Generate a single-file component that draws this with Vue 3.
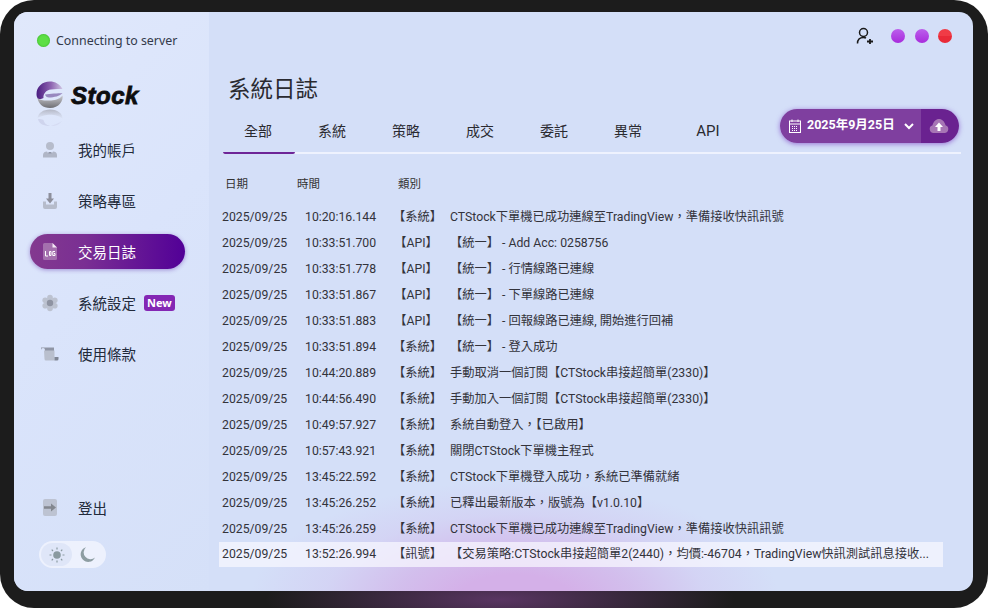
<script setup>
const menu = [
  { key: 'user', label: '我的帳戶' },
  { key: 'strategy', label: '策略專區' },
  { key: 'log', label: '交易日誌', active: true },
  { key: 'gear', label: '系統設定', badge: 'New' },
  { key: 'scroll', label: '使用條款' },
]
const tabs = ['全部', '系統', '策略', '成交', '委託', '異常', 'API']
const rows = [
  ['10:20:16.144', '【系統】', 'CTStock下單機已成功連線至TradingView，準備接收快訊訊號'],
  ['10:33:51.700', '【API】', '【統一】 - Add Acc: 0258756'],
  ['10:33:51.778', '【API】', '【統一】 - 行情線路已連線'],
  ['10:33:51.867', '【API】', '【統一】 - 下單線路已連線'],
  ['10:33:51.883', '【API】', '【統一】 - 回報線路已連線, 開始進行回補'],
  ['10:33:51.894', '【系統】', '【統一】 - 登入成功'],
  ['10:44:20.889', '【系統】', '手動取消一個訂閱【CTStock串接超簡單(2330)】'],
  ['10:44:56.490', '【系統】', '手動加入一個訂閱【CTStock串接超簡單(2330)】'],
  ['10:49:57.927', '【系統】', '系統自動登入，【已啟用】'],
  ['10:57:43.921', '【系統】', '關閉CTStock下單機主程式'],
  ['13:45:22.592', '【系統】', 'CTStock下單機登入成功，系統已準備就緒'],
  ['13:45:26.252', '【系統】', '已釋出最新版本，版號為【v1.0.10】'],
  ['13:45:26.259', '【系統】', 'CTStock下單機已成功連線至TradingView，準備接收快訊訊號'],
  ['13:52:26.994', '【訊號】', '【交易策略:CTStock串接超簡單2(2440)，均價:-46704，TradingView快訊測試訊息接收...', true],
]
</script>

<template>
  <div class="page">
    <div class="frame">
      <div class="window">
        <div class="glow"></div>
        <aside class="sidebar">
          <div class="status"><span class="led"></span>Connecting to server</div>
          <div class="logo">
            <svg class="logo-mark" width="28" height="46" viewBox="0 0 28 46">
              <defs>
                <linearGradient id="lgTop" x1="0" y1="0" x2="1" y2="0">
                  <stop offset="0" stop-color="#4a1d80" />
                  <stop offset="0.55" stop-color="#8d62b0" />
                  <stop offset="1" stop-color="#cfc6e4" />
                </linearGradient>
                <linearGradient id="lgBot" x1="0" y1="0" x2="0" y2="1">
                  <stop offset="0" stop-color="#c9c9cf" />
                  <stop offset="1" stop-color="#6f6f74" />
                </linearGradient>
                <linearGradient id="lgRef" x1="0" y1="0" x2="0" y2="1">
                  <stop offset="0" stop-color="#8f8f98" stop-opacity=".55" />
                  <stop offset="1" stop-color="#b8b8c4" stop-opacity=".05" />
                </linearGradient>
              </defs>
              <path d="M26.500 8C24 3 19 .5 14 .5C6 .5 .5 6 .5 13C.5 15 1 16.500 2 18C4 18 6 18 7.500 17C7 13 10 9 15 8.500C19 8 24 8 26.500 8Z" fill="url(#lgTop)" />
              <path d="M1.500 17C4 19 7 19.500 11 19.500C16 20 23 19 26.500 14.500C27.500 20 23 27 14 27C7 27 2.500 23 1.500 17Z" fill="url(#lgBot)" />
              <path d="M9 13.500C14 12.500 22 12.500 26.500 12C24 15 18 16.500 13 16.500C11 16.500 9.500 15.500 9 13.500Z" fill="#5f3b8e" opacity=".55" />
              <path d="M1.500 37C2.500 32 7 28.500 14 28.500C22 28.500 27 33 26.500 38C23 34 16 33.500 11 34C7 34.500 4 35.500 1.500 37Z" fill="url(#lgRef)" />
              <path d="M2 38C4 38 6 38 7.500 39C8 42 10 44 14 45C8 45 3 43 2 38Z" fill="#7a6a9c" opacity=".14" />
              <path d="M26 40C24 43 20 45 15 45C19 43.500 23 42 26 40Z" fill="#a79fc0" opacity=".14" />
            </svg>
            <span class="logo-text">Stock</span>
          </div>
          <nav class="menu">
            <a v-for="m in menu" :key="m.key" class="item" :class="{ active: m.active }">
              <span class="ico">
                <svg v-if="m.key === 'user'" width="18" height="18" viewBox="0 0 18 18">
                  <circle cx="9" cy="5" r="4" fill="#b6bccb" />
                  <path d="M2 14C2 11.500 4 10.500 6 10.500L7 12L11 12L12 10.500C14 10.500 16 11.500 16 14L16 16.500L2 16.500Z" fill="#b0b6c6" />
                  <rect x="7.500" y="11" width="3" height="1.500" fill="#8f95a6" />
                </svg>
                <svg v-else-if="m.key === 'strategy'" width="18" height="18" viewBox="0 0 18 18">
                  <path d="M2 9.500L5 9.500L5 12.500L13 12.500L13 9.500L16 9.500L16 15A2 2 0 0 1 14 17L4 17A2 2 0 0 1 2 15Z" fill="#b6bccb" />
                  <path d="M7.500 1L10.500 1L10.500 6.500L13 6.500L9 11.500L5 6.500L7.500 6.500Z" fill="#8d8f9b" />
                </svg>
                <svg v-else-if="m.key === 'log'" width="14" height="17" viewBox="0 0 14 17">
                  <path d="M1.500 0L9.500 0L14 4.500L14 15.500A1.500 1.500 0 0 1 12.500 17L1.500 17A1.500 1.500 0 0 1 0 15.500L0 1.500A1.500 1.500 0 0 1 1.500 0Z" fill="#a470ae" />
                  <path d="M9.500 0L14 4.500L9.500 4.500Z" fill="#f4e8f6" />
                  <path d="M2.500 8L2.500 13L5 13M6.500 8.500H8V12.500H6.500ZM12 8.500H9.800V12.500H12V10.500H11" fill="none" stroke="#fff" stroke-width="1" />
                </svg>
                <svg v-else-if="m.key === 'gear'" width="18" height="18" viewBox="0 0 18 18">
                  <g fill="#bcc2d0">
                    <circle cx="9" cy="3.500" r="2.800" />
                    <circle cx="9" cy="14.500" r="2.800" />
                    <circle cx="4.200" cy="6.200" r="2.800" />
                    <circle cx="13.800" cy="6.200" r="2.800" />
                    <circle cx="4.200" cy="11.800" r="2.800" />
                    <circle cx="13.800" cy="11.800" r="2.800" />
                    <circle cx="9" cy="9" r="5.500" />
                  </g>
                  <circle cx="9" cy="9" r="3.200" fill="#8e93a2" />
                </svg>
                <svg v-else-if="m.key === 'scroll'" width="20" height="16" viewBox="0 0 20 16">
                  <path d="M1 1.500L14 1.500L14 5L5 5L5 4A2 2 0 0 0 1 4Z" fill="#8f95a5" />
                  <path d="M4 4.500L14.500 4.500L14.500 14.500L6 14.500A1.500 1.500 0 0 1 4.500 13Z" fill="#b9bfcd" />
                  <path d="M14.500 11L18.500 11L18.500 13A1.500 1.500 0 0 1 17 14.500L14.500 14.500Z" fill="#7f8594" />
                </svg>
              </span>
              <span class="label">{{ m.label }}</span>
              <span v-if="m.badge" class="badge">{{ m.badge }}</span>
            </a>
          </nav>
          <div class="spacer"></div>
          <a class="item">
            <span class="ico">
              <svg width="14" height="17" viewBox="0 0 14 17">
                <rect x="0" y="0" width="14" height="17" rx="2" fill="#bdc3d2" />
                <path d="M1 7.200L8 7.200L8 4.500L13 8.500L8 12.500L8 9.800L1 9.800Z" fill="#83878f" />
              </svg>
            </span>
            <span class="label">登出</span>
          </a>
          <div class="toggle">
            <span class="tg tg-on">
              <svg width="16" height="16" viewBox="0 0 16 16" fill="#8a9aa0">
                <circle cx="8" cy="8" r="3.800" />
                <g stroke="#8a9aa0" stroke-width="1.200">
                  <path d="M8 0.500V2.500M8 13.500V15.500M.5 8H2.500M13.500 8H15.500M2.700 2.700L4 4M12 12L13.300 13.300M2.700 13.300L4 12M12 4L13.300 2.700" />
                </g>
              </svg>
            </span>
            <span class="tg">
              <svg width="15" height="15" viewBox="0 0 15 15">
                <path d="M6 .2A7.500 7.500 0 1 0 15 10.500A6 6 0 0 1 6 .2Z" fill="#8d9da2" />
              </svg>
            </span>
          </div>
        </aside>
        <main class="main">
          <header class="top">
            <svg class="adduser" width="18" height="18" viewBox="0 0 18 18" fill="none" stroke="#1a1a1a" stroke-width="1.500">
              <circle cx="7.500" cy="5.500" r="4" />
              <path d="M1.500 16.500C1.500 12.500 4 10.500 7.500 10.500C8.500 10.500 9.500 10.700 10 11" />
              <path d="M11 14.500H17M14 12V17" stroke-width="1.800" />
            </svg>
            <span class="dot"></span>
            <span class="dot"></span>
            <span class="dot red"></span>
          </header>
          <h1 class="title">系統日誌</h1>
          <div class="tabs-wrap">
            <div class="tabs">
              <span v-for="(t, i) in tabs" :key="t" class="tab" :class="{ on: i === 0, api: t === 'API' }">{{ t }}</span>
            </div>
            <div class="date-btn">
              <div class="date-main">
                <svg width="14" height="14" viewBox="0 0 14 14" fill="none" stroke="#fff" stroke-width="1">
                  <rect x="1.500" y="2" width="11" height="11.500" />
                  <path d="M1.500 5H12.500M4 .5V3M10 .5V3" />
                  <path d="M4 7.500H10M4 9.500H10M4 11.500H10" stroke-dasharray="1 1" />
                </svg>
                <span class="date-text">2025年9月25日</span>
                <svg class="chev" width="10" height="7" viewBox="0 0 10 7" fill="none" stroke="#fff" stroke-width="2">
                  <path d="M1 1L5 5L9 1" />
                </svg>
              </div>
              <div class="date-up">
                <svg width="20" height="14" viewBox="0 0 20 14">
                  <path d="M4.500 14A4 4 0 0 1 3.500 6.200C4.500 2.500 7 0 10 0C13 0 15.500 2.500 16.500 6.200A4 4 0 0 1 15.500 14Z" fill="#a775b5" />
                  <path d="M10 3.500L14 8L11.500 8L11.500 12L8.500 12L8.500 8L6 8Z" fill="#fff" />
                </svg>
              </div>
            </div>
          </div>
          <div class="heads">
            <span class="h-date">日期</span>
            <span class="h-time">時間</span>
            <span>類別</span>
          </div>
          <div class="rows">
            <div v-for="(r, i) in rows" :key="i" class="row" :class="{ hi: r[3] }">
              <span class="r-date">2025/09/25</span>
              <span class="r-time">{{ r[0] }}</span>
              <span class="r-type">{{ r[1] }}</span>
              <span class="r-msg">{{ r[2] }}</span>
            </div>
          </div>
        </main>
      </div>
      <div class="glow-outer"></div>
    </div>
  </div>
</template>

<style>
html, body { margin: 0; background: #fff; }
</style>

<style scoped>
.page { width: 988px; height: 608px; overflow: hidden; font-family: Roboto, "Noto Sans CJK TC", sans-serif; color: #222; }
.frame { position: relative; width: 988px; height: 608px; box-sizing: border-box; padding: 12px 15px 17px 14px; background: #1c1c1c; border-radius: 34px; overflow: hidden; }
.window { position: relative; display: flex; width: 959px; height: 579px; background: #d4dff8; border-radius: 14px; overflow: hidden; }
.sidebar { position: relative; width: 195px; flex: none; display: flex; flex-direction: column; box-sizing: border-box; padding: 0 0 23px 16px; background: linear-gradient(135deg, #e0e8fb 0%, #dae4fb 45%, #d5e0f8 100%); }
.status { display: flex; align-items: center; margin: 20px 0 0 7px; height: 16px; font: 12.400px "Noto Sans", sans-serif; color: #333a4a; }
.led { width: 13px; height: 13px; margin-right: 6px; border-radius: 50%; background: #5ddf45; box-shadow: inset 0 0 2px #2da51f; }
.logo { display: flex; align-items: flex-start; margin: 33px 0 0 6px; height: 46px; }
.logo-text { margin-left: 7px; margin-top: -3px; font: italic 700 24px/36px "Liberation Sans", sans-serif; color: #0d0d0f; -webkit-text-stroke: .8px #0d0d0f; letter-spacing: .5px; }
.menu { display: flex; flex-direction: column; gap: 16px; margin-top: 5px; }
.item { display: flex; align-items: center; width: 155px; height: 35px; box-sizing: border-box; border-radius: 18px; font-size: 14.500px; color: #222a3a; }
.item.active { color: #fff; background: linear-gradient(90deg, #83398f 0%, #7a2f93 35%, #520097 100%); box-shadow: 0 1px 4px rgba(90, 40, 170, .45); }
.ico { width: 48px; flex: none; display: flex; justify-content: center; align-items: center; padding-right: 8px; box-sizing: border-box; }
.badge { margin-left: 8px; padding: 0 3px; height: 16px; border-radius: 3px; background: #8427b4; color: #fff; font: 700 11px/16px "Noto Sans", sans-serif; }
.spacer { flex: 1; }
.toggle { display: flex; align-items: center; width: 67px; height: 27px; margin: 16px 0 0 9px; box-sizing: border-box; padding: 2px; border-radius: 14px; background: #edf1fd; }
.tg { width: 31px; height: 23px; display: flex; align-items: center; justify-content: center; border-radius: 12px; }
.tg-on { background: #dfe6f8; }
.main { position: relative; flex: 1; min-width: 0; display: flex; flex-direction: column; box-sizing: border-box; padding-left: 10px; }
.top { display: flex; align-items: center; justify-content: flex-end; height: 18px; padding: 15px 21px 0 0; }
.adduser { margin-right: 17px; }
.dot { width: 14px; height: 14px; margin-left: 9.500px; border-radius: 50%; background: linear-gradient(180deg, #bb5fec 0%, #a82bdc 100%); }
.adduser + .dot { margin-left: 0; }
.dot.red { background: linear-gradient(180deg, #f03b46 50%, #e92a38 50%); }
.title { margin: 29px 0 0 9px; font-size: 22.500px; line-height: 30px; font-weight: 400; color: #2a2a30; }
.tabs-wrap { position: relative; display: flex; margin: 13px 12px 0 4px; height: 35px; border-bottom: 2px solid #eef2fe; }
.tabs { display: flex; }
.tab { width: 74px; text-align: center; height: 35px; line-height: 29px; font-size: 14px; color: #2a2a30; box-sizing: border-box; }
.tab.on { width: 72px; padding-right: 2px; border-bottom: 2px solid #6e2597; height: 37px; border-radius: 0 0 2px 2px; }
.tab.api { margin-left: 6px; font-size: 15px; }
.date-btn { position: absolute; right: 2px; top: -8px; display: flex; width: 179px; height: 34px; border-radius: 17px; overflow: hidden; color: #fff; box-shadow: 0 1px 5px rgba(110, 40, 190, .6); }
.date-main { flex: 1; display: flex; align-items: center; padding-left: 8px; background: #7f3f9f; }
.date-text { margin-left: 5px; font-size: 12.500px; line-height: 32px; height: 34px; font-weight: 700; }
.chev { margin-left: 9px; }
.date-up { width: 38px; display: flex; align-items: center; justify-content: center; padding-right: 2px; box-sizing: border-box; background: #6a2290; }
.heads { display: flex; margin: 21px 0 0 6px; height: 18px; font-size: 11.500px; line-height: 18px; color: #333; }
.h-date { width: 72px; }
.h-time { width: 101px; }
.rows { margin-top: 11px; width: 724px; }
.row { display: flex; height: 26px; line-height: 26px; font-size: 12.250px; color: #33333b; white-space: nowrap; box-sizing: border-box; padding-left: 3px; }
.row.hi { height: 25px; line-height: 25px; background: rgba(248, 248, 255, .72); }
.r-date { width: 83px; flex: none; }
.r-time { width: 88px; flex: none; }
.r-type { width: 46px; margin-right: 11px; text-align: center; flex: none; }
.r-msg { flex: 1; min-width: 0; }
.glow { position: absolute; left: 236px; bottom: -130px; width: 530px; height: 240px; border-radius: 50%; background: radial-gradient(closest-side, rgba(212, 176, 232, 1) 22%, rgba(210, 178, 232, .72) 45%, rgba(210, 186, 236, .3) 72%, rgba(212, 190, 236, 0) 100%); pointer-events: none; }
.glow-outer { position: absolute; left: 265px; top: 591px; width: 470px; height: 17px; background: radial-gradient(closest-side at 50% 50%, rgba(130, 70, 145, .6), rgba(130, 70, 145, 0)); background-size: 100% 80px; background-position: 50% 50%; pointer-events: none; }
</style>
